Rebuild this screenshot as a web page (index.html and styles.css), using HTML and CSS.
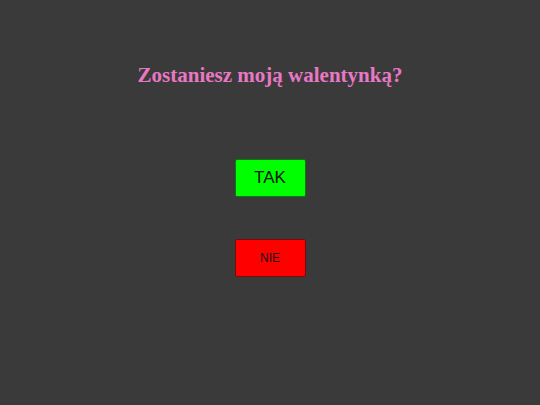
FILE: index.html
```html
<!DOCTYPE html>
<html lang="pl">
<head>
<meta charset="utf-8">
<title>Walentynka</title>
<link rel="stylesheet" href="styles.css">
</head>
<body>
<main class="page">
  <h1 class="question">Zostaniesz moją walentynką?</h1>
  <div class="buttons">
    <button class="btn btn-yes">TAK</button>
    <button class="btn btn-no">NIE</button>
  </div>
</main>
</body>
</html>
```
FILE: styles.css
```css
html, body {
  margin: 0;
  padding: 0;
  background: #3a3a3a;
}
.page {
  display: flex;
  flex-direction: column;
  align-items: center;
  padding-top: 63px;
}
.question {
  margin: 0;
  font-family: "Liberation Serif", "Times New Roman", serif;
  font-weight: bold;
  font-size: 21px;
  line-height: 24px;
  color: #e878c4;
}
.buttons {
  display: flex;
  flex-direction: column;
  align-items: center;
  gap: 42px;
  margin-top: 72px;
}
.btn {
  box-sizing: border-box;
  width: 71px;
  height: 38px;
  padding: 0;
  border-radius: 2px;
  font-family: "Liberation Sans", Arial, sans-serif;
  color: #111;
  cursor: pointer;
}
.btn-yes {
  background: #00ff00;
  border: 1px solid #0a7a0a;
  font-size: 17px;
}
.btn-no {
  background: #ff0000;
  border: 1px solid #7a0a0a;
  font-size: 12px;
}
```
